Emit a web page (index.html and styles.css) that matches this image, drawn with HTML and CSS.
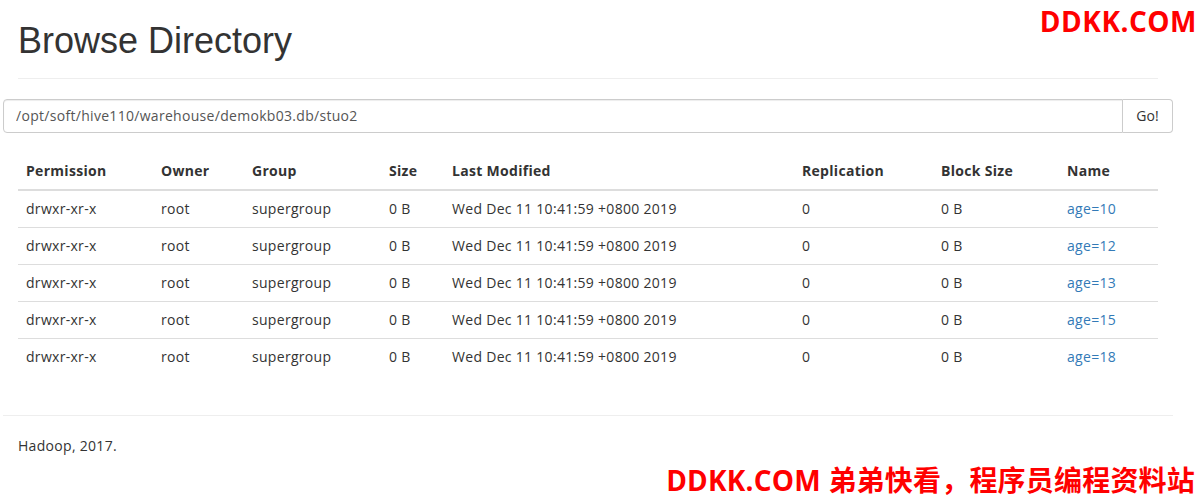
FILE: index.html
```html
<!DOCTYPE html>
<html lang="en">
<head>
<meta charset="utf-8">
<title>Browsing HDFS</title>
<link rel="stylesheet" href="styles.css">
</head>
<body>

<div class="mark-top">DDKK.COM</div>

<div class="container">
  <div class="page-header">
    <h1>Browse Directory</h1>
  </div>

  <div class="input-group">
    <input class="form-control" type="text" value="/opt/soft/hive110/warehouse/demokb03.db/stuo2">
    <button class="btn">Go!</button>
  </div>

  <div class="table-wrap">
    <table class="table">
      <colgroup>
        <col style="width:135px"><col style="width:91px"><col style="width:137px"><col style="width:63px">
        <col style="width:350px"><col style="width:139px"><col style="width:126px"><col>
      </colgroup>
      <thead>
        <tr>
          <th>Permission</th><th>Owner</th><th>Group</th><th>Size</th>
          <th>Last Modified</th><th>Replication</th><th>Block Size</th><th>Name</th>
        </tr>
      </thead>
      <tbody>
        <tr><td>drwxr-xr-x</td><td>root</td><td>supergroup</td><td>0 B</td><td>Wed Dec 11 10:41:59 +0800 2019</td><td>0</td><td>0 B</td><td><a href="#">age=10</a></td></tr>
        <tr><td>drwxr-xr-x</td><td>root</td><td>supergroup</td><td>0 B</td><td>Wed Dec 11 10:41:59 +0800 2019</td><td>0</td><td>0 B</td><td><a href="#">age=12</a></td></tr>
        <tr><td>drwxr-xr-x</td><td>root</td><td>supergroup</td><td>0 B</td><td>Wed Dec 11 10:41:59 +0800 2019</td><td>0</td><td>0 B</td><td><a href="#">age=13</a></td></tr>
        <tr><td>drwxr-xr-x</td><td>root</td><td>supergroup</td><td>0 B</td><td>Wed Dec 11 10:41:59 +0800 2019</td><td>0</td><td>0 B</td><td><a href="#">age=15</a></td></tr>
        <tr><td>drwxr-xr-x</td><td>root</td><td>supergroup</td><td>0 B</td><td>Wed Dec 11 10:41:59 +0800 2019</td><td>0</td><td>0 B</td><td><a href="#">age=18</a></td></tr>
      </tbody>
    </table>
  </div>

  <hr class="foot-rule">
  <div class="footer">Hadoop, 2017.</div>
</div>

<div class="mark-bottom">DDKK.COM 弟弟快看，程序员编程资料站</div>

</body>
</html>
```

FILE: styles.css
```css
* {
	box-sizing: border-box;
}

body {
	margin: 0;
	background: #fff;
	color: #333;
	font: 14px "Open Sans", "Noto Sans CJK SC", sans-serif;
	line-height: 1.42857;
	letter-spacing: 0.3px;
}

a {
	color: #337ab7;
	text-decoration: none;
}

.container {
	width: 1170px;
	margin-left: 3px;
}

.page-header {
	margin: 0 15px;
	padding: 21px 0 17px 0;
	border-bottom: 1px solid #eee;
}

h1 {
	margin: 0;
	font: 36px "Liberation Sans", Arial, sans-serif;
	line-height: 1.1;
	letter-spacing: 0;
	color: #333;
}

.input-group {
	display: flex;
	margin-top: 20px;
	height: 34px;
}

.form-control {
	flex: 1;
	height: 34px;
	padding: 6px 12px;
	border: 1px solid #ccc;
	border-radius: 4px 0 0 4px;
	font: inherit;
	letter-spacing: 0.3px;
	color: #555;
	box-shadow: inset 0 1px 1px rgba(0,0,0,.075);
}

.btn {
	width: 50px;
	height: 34px;
	border: 1px solid #ccc;
	border-left: 0;
	border-radius: 0 4px 4px 0;
	background: #fff;
	font: inherit;
	color: #333;
	padding: 0;
}

.table-wrap {
	padding: 20px 15px 0 15px;
}

.table {
	width: 1140px;
	border-collapse: collapse;
	table-layout: fixed;
	margin-bottom: 20px;
}

.table th {
	text-align: left;
	font-weight: bold;
	padding: 8px;
	border-bottom: 2px solid #ddd;
}

.table td {
	padding: 8px;
	border-top: 1px solid #ddd;
}

.table tbody tr:first-child td {
	border-top: 0;
}

.foot-rule {
	border: 0;
	border-top: 1px solid #eee;
	margin: 40px 0 0 0;
}

.footer {
	padding: 20px 15px;
	color: #333;
}

.mark-top {
	position: absolute;
	top: 2px;
	right: 4px;
	color: #f00;
	font: bold 28px "Open Sans", sans-serif;
	letter-spacing: 0.5px;
}

.mark-bottom {
	position: absolute;
	top: 462px;
	right: 6px;
	color: #f00;
	font: bold 28px "Open Sans", "Noto Sans CJK SC", sans-serif;
	line-height: 1.3;
	letter-spacing: 0.2px;
	white-space: nowrap;
}
```
